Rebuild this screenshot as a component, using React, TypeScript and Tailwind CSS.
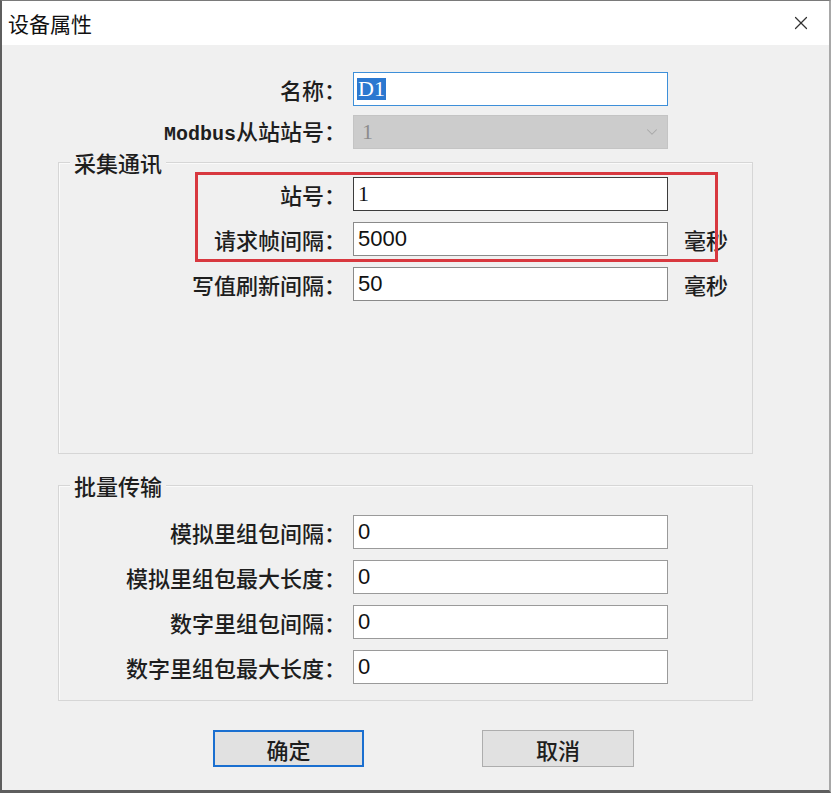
import React from "react";
import { X, ChevronDown } from "lucide-react";

const cjk = { fontFamily: '"Noto Sans CJK SC", "Noto Sans", sans-serif' };
const serif = { fontFamily: '"Liberation Serif", "Noto Sans CJK SC", serif' };
const sans = { fontFamily: '"Liberation Sans", "Noto Sans CJK SC", sans-serif' };

function Label({ w, children }: { w: string; children: React.ReactNode }) {
  return (
    <div className={`${w} shrink-0 text-right text-[22px] leading-none text-[#1e1e1e] font-medium whitespace-nowrap`} style={cjk}>
      {children}
    </div>
  );
}

function Field({
  label,
  value,
  w,
  border = "border-[#8a8a8a]",
  unit,
  font = sans,
}: {
  label: React.ReactNode;
  value: string;
  w: string;
  border?: string;
  unit?: string;
  font?: React.CSSProperties;
}) {
  return (
    <div className="flex items-center h-[34px]">
      <Label w={w}>{label}</Label>
      <div
        className={`ml-[7px] w-[315px] h-[34px] bg-white border ${border} flex items-center pl-[4px] text-[22px] leading-none text-[#111]`}
        style={font}
      >
        {value}
      </div>
      {unit && (
        <div className="ml-[16px] text-[22px] leading-none font-medium text-[#1e1e1e]" style={cjk}>
          {unit}
        </div>
      )}
    </div>
  );
}

function Group({
  title,
  h,
  pt,
  children,
}: {
  title: string;
  h: string;
  pt: string;
  children: React.ReactNode;
}) {
  return (
    <div className={`relative ml-[56px] w-[695px] ${h} border border-[#d6d6d6] shadow-[inset_1px_1px_0_#fafafa] ${pt}`}>
      <div
        className="absolute left-[11px] top-[-13px] bg-[#f0f0f0] px-[4px] text-[22px] leading-[24px] font-medium text-[#1e1e1e]"
        style={cjk}
      >
        {title}
      </div>
      <div className="flex flex-col gap-[11px]">{children}</div>
    </div>
  );
}

export default function App() {
  return (
    <div className="relative w-[831px] h-[793px] bg-[#f0f0f0] border-l-2 border-t border-b-[3px] border-r-2 border-l-[#5e5e5e] border-t-[#7a7a7a] border-b-[#5e5e5e] border-r-[#a8a8a8] overflow-hidden">
      {/* title bar */}
      <div className="h-[44px] bg-white flex items-center justify-between pl-[6px] pr-[17px]">
        <div className="text-[21px] leading-none text-[#111]" style={cjk}>
          设备属性
        </div>
        <X size={22} strokeWidth={1.3} className="text-[#333]" />
      </div>

      {/* name row */}
      <div className="mt-[27px] flex items-center h-[34px]">
        <Label w="w-[344px]">名称：</Label>
        <div className="ml-[7px] w-[315px] h-[34px] bg-white border border-[#3d8fd9] flex items-center pl-[3px]">
          <span className="bg-[#2b78d0] text-white text-[22px] leading-[22px] px-[1px]" style={serif}>
            D1
          </span>
        </div>
      </div>

      {/* modbus row */}
      <div className="mt-[9px] flex items-center h-[34px]">
        <Label w="w-[344px]">
          <span style={{ fontFamily: '"Liberation Mono", monospace' }} className="font-bold text-[20px]">
            Modbus
          </span>
          从站站号：
        </Label>
        <div className="ml-[7px] w-[315px] h-[34px] bg-[#cccccc] border border-[#c4c4c4] flex items-center justify-between pl-[8px] pr-[6px]">
          <span className="text-[22px] leading-none text-[#8c8c8c]" style={serif}>
            1
          </span>
          <ChevronDown size={18} strokeWidth={1.4} className="text-[#a8a8a8]" />
        </div>
      </div>

      {/* group 1 */}
      <div className="mt-[13px]">
        <Group title="采集通讯" h="h-[292px]" pt="pt-[14px]">
          <Field w="w-[287px]" label="站号：" value="1" border="border-[#3c3c3c]" font={serif} />
          <Field w="w-[287px]" label="请求帧间隔：" value="5000" unit="毫秒" />
          <Field w="w-[287px]" label="写值刷新间隔：" value="50" unit="毫秒" />
        </Group>
      </div>

      {/* group 2 */}
      <div className="mt-[31px]">
        <Group title="批量传输" h="h-[216px]" pt="pt-[29px]">
          <Field w="w-[287px]" label="模拟里组包间隔：" value="0" border="border-[#9a9a9a]" />
          <Field w="w-[287px]" label="模拟里组包最大长度：" value="0" border="border-[#9a9a9a]" />
          <Field w="w-[287px]" label="数字里组包间隔：" value="0" border="border-[#9a9a9a]" />
          <Field w="w-[287px]" label="数字里组包最大长度：" value="0" border="border-[#9a9a9a]" />
        </Group>
      </div>

      {/* buttons */}
      <div className="mt-[29px] flex items-center">
        <button
          className="ml-[211px] w-[151px] h-[37px] bg-[#e1e1e1] border-2 border-[#1a6fd0] text-[22px] leading-none font-medium text-[#1e1e1e]"
          style={cjk}
        >
          确定
        </button>
        <button
          className="ml-[118px] w-[152px] h-[37px] bg-[#e1e1e1] border border-[#adadad] text-[22px] leading-none font-medium text-[#1e1e1e]"
          style={cjk}
        >
          取消
        </button>
      </div>

      {/* red annotation */}
      <div className="absolute left-[193px] top-[171px] w-[523px] h-[90px] border-[3px] border-[#d8383f] pointer-events-none" />
    </div>
  );
}
